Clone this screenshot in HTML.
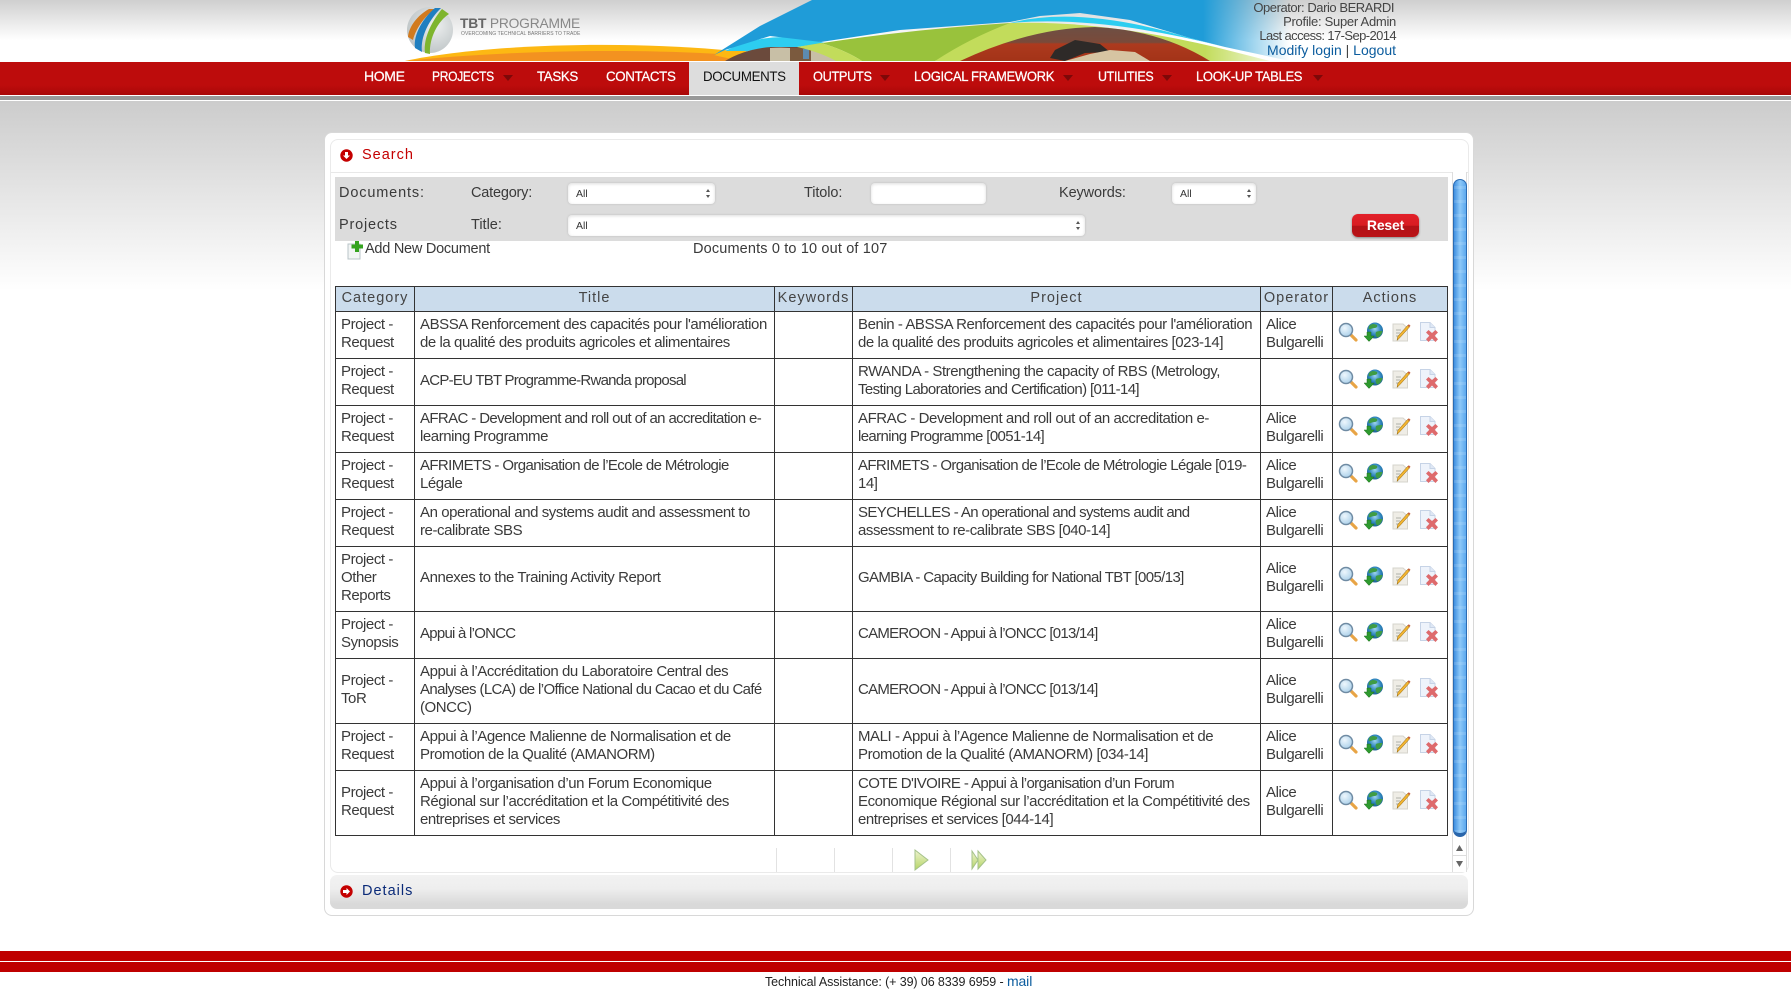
<!DOCTYPE html>
<html><head><meta charset="utf-8"><title>TBT Programme - Documents</title>
<style>
html,body{margin:0;padding:0;background:#fff}
body{width:1791px;height:995px;position:relative;overflow:hidden;font-family:"Liberation Sans",sans-serif;color:#333;font-size:15px}
.abs,.n{position:absolute;white-space:nowrap}
#top{position:absolute;left:0;top:0;width:1791px;height:62px;background:linear-gradient(#cfcfcf,#fff 40px)}
#blue{position:absolute;left:710px;top:0;width:580px;height:61px;z-index:5;background:linear-gradient(90deg,#1f9cd8 0,#1f9cd8 85%,rgba(31,156,216,0) 100%);clip-path:polygon(102px 0,580px 0,580px 61px,515px 47px,480px 38px,420px 20px,370px 13px,330px 16px,300px 22px,190px 30px,111px 42px,60px 36px,15px 50px,4px 55px,50px 26px)}
#nav{position:absolute;left:0;top:62px;width:1791px;height:33px;background:linear-gradient(#bd0c0c 0,#bd0c0c 70%,#a90808 100%)}
#line{position:absolute;left:0;top:96px;width:1791px;height:4px;background:#999}
#bg{position:absolute;left:0;top:101px;width:1791px;height:190px;background:linear-gradient(#ccc,#fff)}
.n{top:0;line-height:29px;font-size:14px;color:#fff;letter-spacing:-.35px;-webkit-text-stroke:.25px #fff;transform-origin:0 50%}
.tri{position:absolute;top:13px;width:0;height:0;border-left:5px solid transparent;border-right:5px solid transparent;border-top:6px solid #7d0808}
#tab{position:absolute;left:689px;top:0;width:110px;height:33px;background:#ddd}
.info{position:absolute;z-index:6;right:395px;text-align:right;white-space:nowrap;font-size:13px;color:#444;line-height:14px}
.info a,.link{color:#0b5c9e;text-decoration:none}
#panel{position:absolute;left:324px;top:132px;width:1148px;height:782px;background:#fff;border:1px solid #d8d8d8;border-radius:8px}
#inner{position:absolute;left:330px;top:139px;width:1137px;height:732px;border:1px solid #eaeaea;border-radius:8px}
#shead{position:absolute;left:331px;top:172px;width:1137px;height:1px;background:#e8e8e8}
#filter{position:absolute;left:335px;top:177px;width:1113px;height:64px;background:#dcdcdc}
.lb{position:absolute;white-space:nowrap;line-height:18px;font-size:14.5px;color:#3a3a3a}
.sel,.inp{position:absolute;height:21px;background:#fff;border-radius:4px;box-shadow:0 0 2px #bbb,inset 0 1px 3px #ddd;font-size:10.5px;line-height:22px;color:#333;text-indent:8px}
.sel:before{content:"";position:absolute;right:5px;top:6px;border-left:2.5px solid transparent;border-right:2.5px solid transparent;border-bottom:3.5px solid #555}
.sel:after{content:"";position:absolute;right:5px;top:12px;border-left:2.5px solid transparent;border-right:2.5px solid transparent;border-top:3.5px solid #555}
#reset{position:absolute;left:1352px;top:214px;width:67px;height:23px;border-radius:6px;background:linear-gradient(#e2212a 0,#d81c22 50%,#b21217 52%,#b91317 100%);box-shadow:0 1px 2px #888;color:#fff;font-weight:bold;font-size:14px;line-height:22px;text-align:center;letter-spacing:-.2px}
table{position:absolute;left:335px;top:286px;border-collapse:collapse;table-layout:fixed;width:1113px;color:#3a3a3a}
td,th{border:1px solid #333;padding:0 0 2px 5px;line-height:18px;font-size:15px;font-weight:normal;vertical-align:middle;white-space:nowrap;overflow:hidden}
th{background:#cbdcec;text-align:center;padding:0 0 2px 0;letter-spacing:1px;font-size:14.5px;height:22px;color:#444}
td{letter-spacing:-.44px}
td i{font-style:normal;letter-spacing:-.62px}
td u{text-decoration:none;letter-spacing:-.75px}
tr.a td{height:44px}tr.b td{height:62px}
.ic{position:relative;display:block;height:20px;width:100px}
.ic svg{position:absolute;top:-2px;width:20px;height:20px}
#track{position:absolute;left:1452px;top:172px;width:15px;height:700px;background:#fff;border-left:1px solid #ddd;border-right:1px solid #ddd;box-sizing:border-box}
#thumb{position:absolute;left:1453px;top:179px;width:14px;height:658px;box-sizing:border-box;border-radius:7px;border:1.5px solid #2b6cb4;border-bottom:4px solid #2a66ab;background:repeating-linear-gradient(0deg,rgba(255,255,255,.12) 0 3px,rgba(0,0,0,0) 3px 14px),linear-gradient(90deg,#3f8fe0,#8cc8f8 50%,#5ba8ee)}
.sep{position:absolute;top:848px;width:1px;height:24px;background:#e2e2e2}
#details{position:absolute;left:330px;top:875px;width:1138px;height:34px;border-radius:7px;background:linear-gradient(#f2f2f2,#eee 40%,#d9d9d9 85%)}
#fred{position:absolute;left:0;top:951px;width:1791px;height:21px;background:#bf0000}
#fline{position:absolute;left:0;top:961px;width:1791px;height:1px;background:#fff}
#foot{position:absolute;left:765px;top:973px;font-size:12.5px;line-height:17px;color:#222;white-space:nowrap;letter-spacing:-.1px}
</style></head><body>
<svg width="0" height="0" style="position:absolute"><defs>
<linearGradient id="lg" x1="0" y1="0" x2="0" y2="1"><stop offset="0" stop-color="#eef3d0"/><stop offset="1" stop-color="#b5d565"/></linearGradient>
<radialGradient id="lens" cx=".4" cy=".35" r=".7"><stop offset="0" stop-color="#eef7fd"/><stop offset="1" stop-color="#a9cfe9"/></radialGradient>
<radialGradient id="glo" cx=".5" cy=".4" r=".6"><stop offset="0" stop-color="#9fd6f0"/><stop offset=".6" stop-color="#2f86be"/><stop offset="1" stop-color="#1c5f90"/></radialGradient>
<radialGradient id="gb" cx=".6" cy=".4" r=".7"><stop offset="0" stop-color="#eef0f0"/><stop offset="1" stop-color="#b9c0c2"/></radialGradient>
<symbol id="i1" viewBox="0 0 20 20"><line x1="12" y1="12" x2="18" y2="18" stroke="#e8a445" stroke-width="3.200" stroke-linecap="round"/><circle cx="8" cy="8" r="6.500" fill="url(#lens)" stroke="#6f8ba3" stroke-width="1.500"/></symbol>
<symbol id="i2" viewBox="0 0 20 20"><circle cx="11" cy="8.500" r="8" fill="url(#glo)"/><path d="M5 4c3-3 6-2 8-1 1 2-1 3-3 3S6 8 4.500 7zM12 10c2-1 5-1 6.500-1-1 4-3 6-5.500 6.500-1-2-2-3-1-5.500z" fill="#3f9c45"/><path d="M3 10h4v4h3.300L5 19.500 0 14h3z" fill="#2e9a2e" stroke="#1e6f1e" stroke-width=".5"/></symbol>
<symbol id="i3" viewBox="0 0 20 20"><path d="M2 2h10l4.500 4v13H2z" fill="#efede6" stroke="#d6d4cc"/><path d="M5 8h5M5 11h4M5 14h3" stroke="#cfcfc8" stroke-width="2"/><path d="M18.500 5 9 15.500l-3 3 .8-4L16.500 3.500z" fill="#f2b430" stroke="#8d6410" stroke-width=".5"/><path d="M16.500 3.500l2 1.500 1-1.200-1.700-1.500z" fill="#c7603a"/></symbol>
<symbol id="i4" viewBox="0 0 20 20"><path d="M1.500 .5h9.500l5 5v13H1.500z" fill="#eef3fb" stroke="#c6d3e6"/><path d="M11 .5v5h5" fill="#dfe8f5" stroke="#c6d3e6"/><path d="M7 10.500 9.500 8l3.500 3 3.500-3 2.500 2.500-3.300 3.300 3.300 3.500L16.500 20 13 16.500 9.500 20 7 17.300l3.300-3.500z" fill="#de6a6c"/></symbol>
<symbol id="pl" viewBox="0 0 20 24"><path d="M3 2 16 12 3 22z" fill="url(#lg)" stroke="#a5c28a"/></symbol>
<symbol id="ff" viewBox="0 0 20 24"><path d="M3 3 9 12 3 21zM9 3 17 12 9 21z" fill="url(#lg)" stroke="#a5c28a"/></symbol>
<linearGradient id="fade" gradientUnits="userSpaceOnUse" x1="1205" x2="1290" y1="0" y2="0"><stop offset="0" stop-color="#fff"/><stop offset="1" stop-color="#000"/></linearGradient>
<mask id="fm" maskUnits="userSpaceOnUse" x="600" y="0" width="800" height="62"><rect x="600" y="0" width="800" height="62" fill="url(#fade)"/></mask>
<linearGradient id="ph" x1="0" x2="0" y1="0" y2="1"><stop offset="0" stop-color="#6d4f44"/><stop offset=".45" stop-color="#7a4a3a"/><stop offset=".5" stop-color="#ad3a1e"/><stop offset="1" stop-color="#a33318"/></linearGradient>
</defs></svg>
<div id="top"></div>
<svg style="position:absolute;left:0;top:0" width="1791" height="61" viewBox="0 0 1791 61">
<path d="M405 61C480 45 620 39 745 52V61Z" fill="#fdb813"/>
<path d="M405 61C490 52 620 47 735 55V61Z" fill="#f39220"/>
<g mask="url(#fm)">
<path d="M725 51Q770 28 825 43L797 47Q760 47 745 52Z" fill="#2dcdf0"/>
<path d="M745 61Q725 58 714 55L725 51 747 51 725 61Z" fill="#fdb813"/>
<path d="M725 61Q745 49 771 47H800Q820 52 840 61Z" fill="#6b4a3c"/>
<path d="M770 48Q800 46 830 55L840 61H770Z" fill="#c8bfa6"/>
<rect x="790" y="48" width="21" height="13" fill="#7b5a3e"/><rect x="803" y="49" width="6" height="10" fill="#5d8bb0"/>
<path d="M797 47Q900 30 1010 23L1030 25Q985 40 935 61H862Q845 50 821 43Z" fill="#99c23c"/>
<path d="M797 47 821 43Q845 50 862 61H836Q820 52 797 47Z" fill="#c2dc5b"/>
<path d="M1010 23Q1100 20 1215 47L1270 61H935Q970 38 1010 23Z" fill="#c2dc5b"/>
<path d="M960 61Q1030 28 1095 27 1160 30 1210 61Z" fill="url(#ph)"/>
<path d="M1055 50 1075 40 1100 44 1110 52 1085 53 1065 61 1050 58Z" fill="#2e2a28"/>
<path d="M1065 61 1090 54 1110 50 1135 52 1150 61Z" fill="#d6c4a2"/>
<path d="M1010 23Q1080 5 1190 38L1225 47Q1100 15 1010 23Z" fill="#2dcdf0"/>
</g></svg>
<div id="blue"></div>
<svg style="position:absolute;left:405px;top:6px" width="52" height="50" viewBox="0 0 52 50">
<circle cx="25" cy="24" r="23" fill="url(#gb)"/>
<path d="M24 3C13 9 4 20 3 31l5 3C11 22 20 10 30 3z" fill="#d17a1e"/>
<path d="M30 2C19 11 8 28 10 42l7 4C15 30 25 13 36 2z" fill="#1f7fc0"/>
<path d="M37 3C28 14 18 31 20 47l5 1C24 32 33 15 44 8z" fill="#7eb52e"/>
</svg>
<div class="abs" style="left:460px;top:15px;font-size:13.8px;line-height:18px;color:#888;letter-spacing:-.2px"><b style="color:#666">TBT</b> PROGRAMME</div>
<div class="abs" style="left:461px;top:31px;font-size:5px;line-height:7px;color:#777;letter-spacing:.05px">OVERCOMING TECHNICAL BARRIERS TO TRADE</div>
<div class="info" style="top:1px;right:397px;letter-spacing:-.45px">Operator: Dario BERARDI</div>
<div class="info" style="top:15px;letter-spacing:-.28px">Profile: Super Admin</div>
<div class="info" style="top:29px;letter-spacing:-.6px">Last access: 17-Sep-2014</div>
<div class="info" style="top:43px;font-size:14px"><a>Modify login</a> | <a>Logout</a></div>
<div id="nav"><div id="tab"></div>
<span class="n" style="left:364px">HOME</span>
<span class="n" style="left:432px;transform:scaleX(.86)">PROJECTS</span><i class="tri" style="left:503px"></i>
<span class="n" style="left:537px;transform:scaleX(.95)">TASKS</span>
<span class="n" style="left:606px;transform:scaleX(.95)">CONTACTS</span>
<span class="n" style="left:703px;color:#111;-webkit-text-stroke:0;transform:scaleX(.95)">DOCUMENTS</span>
<span class="n" style="left:813px;transform:scaleX(.91)">OUTPUTS</span><i class="tri" style="left:880px"></i>
<span class="n" style="left:914px;transform:scaleX(.93)">LOGICAL FRAMEWORK</span><i class="tri" style="left:1063px"></i>
<span class="n" style="left:1098px;transform:scaleX(.89)">UTILITIES</span><i class="tri" style="left:1162px"></i>
<span class="n" style="left:1196px;transform:scaleX(.93)">LOOK-UP TABLES</span><i class="tri" style="left:1313px"></i>
</div>
<div id="line"></div><div id="bg"></div>
<div id="panel"></div><div id="inner"></div><div id="shead"></div>
<svg style="position:absolute;left:340px;top:149px" width="13" height="13" viewBox="0 0 13 13"><circle cx="6.500" cy="6.500" r="6.200" fill="#c40000"/><path d="M5 3h3v3.500h2L6.500 10 3 6.500h2z" fill="#fff"/></svg>
<div class="abs" style="left:362px;top:146px;font-size:14.5px;line-height:18px;color:#c40000;letter-spacing:1px">Search</div>
<div id="filter"></div>
<div class="lb" style="left:339px;top:184px;letter-spacing:.85px">Documents:</div>
<div class="lb" style="left:471px;top:184px;letter-spacing:-.2px">Category:</div>
<div class="sel" style="left:568px;top:183px;width:147px">All</div>
<div class="lb" style="left:804px;top:184px;letter-spacing:-.1px">Titolo:</div>
<div class="inp" style="left:871px;top:183px;width:115px"></div>
<div class="lb" style="left:1059px;top:184px;letter-spacing:-.1px">Keywords:</div>
<div class="sel" style="left:1172px;top:183px;width:84px">All</div>
<div class="lb" style="left:339px;top:216px;letter-spacing:.8px">Projects</div>
<div class="lb" style="left:471px;top:216px">Title:</div>
<div class="sel" style="left:568px;top:215px;width:517px">All</div>
<div id="reset">Reset</div>
<svg style="position:absolute;left:347px;top:241px" width="18" height="19" viewBox="0 0 18 19"><path d="M1 3h12v15H1z" fill="#f2f5f5" stroke="#b9c4c8"/><path d="M8 0h4v3.500h4v4h-4V11H8V7.500H4.500v-4H8z" fill="#35a31f"/></svg>
<div class="lb" style="left:365px;top:240px;letter-spacing:-.25px">Add New Document</div>
<div class="lb" style="left:693px;top:240px;letter-spacing:.15px">Documents 0 to 10 out of 107</div>
<table><colgroup><col style="width:79px"><col style="width:360px"><col style="width:78px"><col style="width:408px"><col style="width:72px"><col style="width:115px"></colgroup>
<tr><th>Category</th><th>Title</th><th>Keywords</th><th>Project</th><th>Operator</th><th>Actions</th></tr>
<tr class="a"><td>Project -<br>Request</td><td>ABSSA Renforcement des capacités pour l'amélioration<br>de la qualité des produits agricoles et alimentaires</td><td></td><td>Benin - ABSSA Renforcement des capacités pour l'amélioration<br>de la qualité des produits agricoles et alimentaires [023-14]</td><td>Alice<br>Bulgarelli</td><td><span class="ic"><svg style="left:0"><use href="#i1"/></svg><svg style="left:26px"><use href="#i2"/></svg><svg style="left:53px"><use href="#i3"/></svg><svg style="left:81px"><use href="#i4"/></svg></span></td></tr>
<tr class="a"><td>Project -<br>Request</td><td><u>ACP-EU TBT Programme-Rwanda proposal</u></td><td></td><td>RWANDA - Strengthening the capacity of RBS (Metrology,<br><i>Testing Laboratories and Certification) [011-14]</i></td><td></td><td><span class="ic"><svg style="left:0"><use href="#i1"/></svg><svg style="left:26px"><use href="#i2"/></svg><svg style="left:53px"><use href="#i3"/></svg><svg style="left:81px"><use href="#i4"/></svg></span></td></tr>
<tr class="a"><td>Project -<br>Request</td><td><i>AFRAC - Development and roll out of an accreditation e-</i><br>learning Programme</td><td></td><td>AFRAC - Development and roll out of an accreditation e-<br><i>learning Programme [0051-14]</i></td><td>Alice<br>Bulgarelli</td><td><span class="ic"><svg style="left:0"><use href="#i1"/></svg><svg style="left:26px"><use href="#i2"/></svg><svg style="left:53px"><use href="#i3"/></svg><svg style="left:81px"><use href="#i4"/></svg></span></td></tr>
<tr class="a"><td>Project -<br>Request</td><td><i>AFRIMETS - Organisation de l’Ecole de Métrologie</i><br>Légale</td><td></td><td><i>AFRIMETS - Organisation de l’Ecole de Métrologie Légale [019-</i><br>14]</td><td>Alice<br>Bulgarelli</td><td><span class="ic"><svg style="left:0"><use href="#i1"/></svg><svg style="left:26px"><use href="#i2"/></svg><svg style="left:53px"><use href="#i3"/></svg><svg style="left:81px"><use href="#i4"/></svg></span></td></tr>
<tr class="a"><td>Project -<br>Request</td><td>An operational and systems audit and assessment to<br>re-calibrate SBS</td><td></td><td><i>SEYCHELLES - An operational and systems audit and</i><br>assessment to re-calibrate SBS [040-14]</td><td>Alice<br>Bulgarelli</td><td><span class="ic"><svg style="left:0"><use href="#i1"/></svg><svg style="left:26px"><use href="#i2"/></svg><svg style="left:53px"><use href="#i3"/></svg><svg style="left:81px"><use href="#i4"/></svg></span></td></tr>
<tr class="b"><td>Project -<br>Other<br>Reports</td><td>Annexes to the Training Activity Report</td><td></td><td><i>GAMBIA - Capacity Building for National TBT [005/13]</i></td><td>Alice<br>Bulgarelli</td><td><span class="ic"><svg style="left:0"><use href="#i1"/></svg><svg style="left:26px"><use href="#i2"/></svg><svg style="left:53px"><use href="#i3"/></svg><svg style="left:81px"><use href="#i4"/></svg></span></td></tr>
<tr class="a"><td>Project -<br>Synopsis</td><td><u>Appui à l’ONCC</u></td><td></td><td><u>CAMEROON - Appui à l’ONCC [013/14]</u></td><td>Alice<br>Bulgarelli</td><td><span class="ic"><svg style="left:0"><use href="#i1"/></svg><svg style="left:26px"><use href="#i2"/></svg><svg style="left:53px"><use href="#i3"/></svg><svg style="left:81px"><use href="#i4"/></svg></span></td></tr>
<tr class="b"><td>Project -<br>ToR</td><td>Appui à l’Accréditation du Laboratoire Central des<br><i>Analyses (LCA) de l’Office National du Cacao et du Café</i><br>(ONCC)</td><td></td><td><u>CAMEROON - Appui à l’ONCC [013/14]</u></td><td>Alice<br>Bulgarelli</td><td><span class="ic"><svg style="left:0"><use href="#i1"/></svg><svg style="left:26px"><use href="#i2"/></svg><svg style="left:53px"><use href="#i3"/></svg><svg style="left:81px"><use href="#i4"/></svg></span></td></tr>
<tr class="a"><td>Project -<br>Request</td><td>Appui à l’Agence Malienne de Normalisation et de<br>Promotion de la Qualité (AMANORM)</td><td></td><td>MALI - Appui à l’Agence Malienne de Normalisation et de<br>Promotion de la Qualité (AMANORM) [034-14]</td><td>Alice<br>Bulgarelli</td><td><span class="ic"><svg style="left:0"><use href="#i1"/></svg><svg style="left:26px"><use href="#i2"/></svg><svg style="left:53px"><use href="#i3"/></svg><svg style="left:81px"><use href="#i4"/></svg></span></td></tr>
<tr class="b"><td>Project -<br>Request</td><td>Appui à l’organisation d’un Forum Economique<br>Régional sur l’accréditation et la Compétitivité des<br>entreprises et services</td><td></td><td><i>COTE D'IVOIRE - Appui à l’organisation d’un Forum</i><br>Economique Régional sur l’accréditation et la Compétitivité des<br>entreprises et services [044-14]</td><td>Alice<br>Bulgarelli</td><td><span class="ic"><svg style="left:0"><use href="#i1"/></svg><svg style="left:26px"><use href="#i2"/></svg><svg style="left:53px"><use href="#i3"/></svg><svg style="left:81px"><use href="#i4"/></svg></span></td></tr>
</table>
<div id="track"></div><div id="thumb"></div>
<svg style="position:absolute;left:1453px;top:842px" width="13" height="30" viewBox="0 0 13 30"><path d="M6.500 3 10 9H3z" fill="#666"/><path d="M0 13.500H13" stroke="#ddd"/><path d="M6.500 25 10 19H3z" fill="#666"/></svg>
<div class="sep" style="left:776px"></div><div class="sep" style="left:834px"></div><div class="sep" style="left:892px"></div><div class="sep" style="left:950px"></div>
<svg style="position:absolute;left:912px;top:848px" width="20" height="24"><use href="#pl"/></svg>
<svg style="position:absolute;left:969px;top:848px" width="20" height="24"><use href="#ff"/></svg>
<div id="details"></div>
<svg style="position:absolute;left:340px;top:885px" width="13" height="13" viewBox="0 0 13 13"><circle cx="6.500" cy="6.500" r="6.200" fill="#c40000"/><path d="M3 5h3.500V3L10 6.500 6.500 10V8H3z" fill="#fff"/></svg>
<div class="abs" style="left:362px;top:882px;font-size:14.5px;line-height:18px;color:#0a2a78;letter-spacing:1px">Details</div>
<div id="fred"></div><div id="fline"></div>
<div id="foot">Technical Assistance: (+ 39) 06 8339 6959 - <span class="link" style="font-size:14px">mail</span></div>
</body></html>
